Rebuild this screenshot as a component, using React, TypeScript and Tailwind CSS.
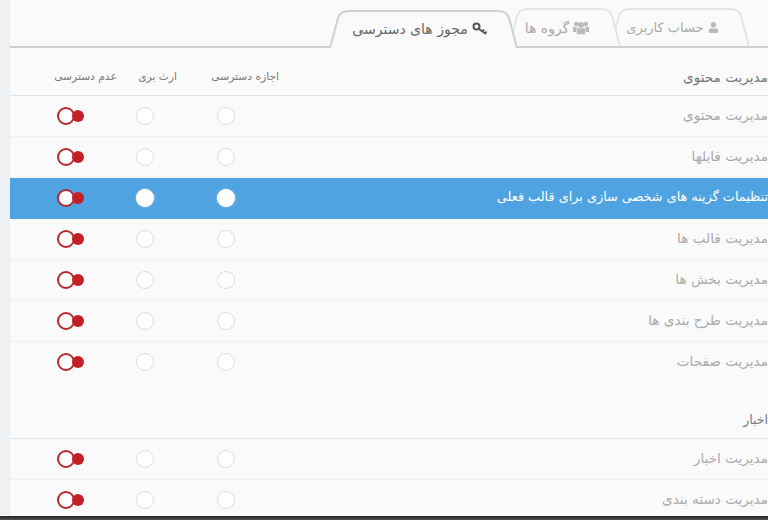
import type { ReactNode } from "react";
import { FaUser } from "react-icons/fa";

const KeyIcon = () => (
  <svg width="15" height="15" viewBox="0 0 15 15" fill="none" stroke="#555" strokeWidth="2">
    <circle cx="4.5" cy="4.5" r="3" />
    <path d="M7 7 L14 12 M10.5 9.5 L12 7.5 M13 11.5 L14.5 9.5" />
  </svg>
);

const UsersIcon = () => (
  <svg width="16" height="14" viewBox="0 0 16 14" fill="#bbb">
    <circle cx="3.2" cy="3" r="2.3" />
    <circle cx="12.8" cy="3" r="2.3" />
    <circle cx="8" cy="4" r="3" />
    <path d="M0 6 H4 V11 H0 Z M12 6 H16 V11 H12 Z" />
    <path d="M3.5 7 H12.5 V13.5 H3.5 Z" stroke="#fafafa" strokeWidth="0.6" />
  </svg>
);

const Tab = ({ width, active, className, children }: { width: number; active?: boolean; className: string; children: ReactNode }) => (
  <div className={`relative h-[38px] shrink-0 ${className}`} style={{ width }}>
    <svg className="absolute inset-0 h-full w-full" viewBox={`0 0 ${width} 38`} fill="none">
      <path
        d={`M1 38 L9 8 Q11 1 20 1 H${width - 20} Q${width - 11} 1 ${width - 9} 8 L${width - 1} 38`}
        fill="#fafafa"
        stroke={active ? "#cfcfcf" : "#e4e4e4"}
        strokeWidth="2"
      />
    </svg>
    <div className={`relative flex h-full items-center justify-center gap-1 pt-[1px] ${active ? "pr-[8px] text-[#666]" : "pr-[15px] text-[#aaa]"}`}>
      {children}
    </div>
  </div>
);

const Row = ({ label, selected, last }: { label: string; selected?: boolean; last?: boolean }) => (
  <div className={`flex h-[41px] items-center border-b pl-[47px] ${selected ? "border-transparent bg-[#4ea3e0]" : last ? "border-transparent" : "border-[#f0f0f0]"}`}>
    <div className="relative h-[18px] w-[18px] shrink-0 rounded-full border-[2px] border-[#b52a2e] bg-white">
      <span className="absolute left-[13px] top-[1px] h-3 w-3 rounded-full bg-[#c22026]" />
    </div>
    <span className={`ml-[61px] h-[18px] w-[18px] shrink-0 rounded-full bg-white ${selected ? "shadow-[0_0_2px_#e5e5e5]" : "border border-[#ddd]"}`} />
    <span className={`ml-[63px] h-[18px] w-[18px] shrink-0 rounded-full bg-white ${selected ? "shadow-[0_0_2px_#e5e5e5]" : "border border-[#ddd]"}`} />
    <div dir="rtl" className={`-mt-[2px] flex-1 ${selected ? "text-[12.8px] text-white" : "text-[13.6px] text-[#aaa]"}`}>
      {label}
    </div>
  </div>
);

export default function App() {
  return (
    <div className="flex h-[520px] w-[768px] flex-col overflow-hidden bg-[#fafafa] font-['DejaVu_Sans',sans-serif]">
      <div className="flex min-h-0 flex-1">
        <div className="w-[10px] shrink-0 bg-[#eef1f3]" />
        <div className="min-w-0 flex-1">
          <div className="flex h-[48px] items-end justify-end border-b-2 border-[#cfcfcf] pr-[18px]">
            <Tab width={189} active className="z-20 -mb-[2px]">
              <span dir="rtl" className="text-[14px]">مجوز های دسترسی</span>
              <KeyIcon />
            </Tab>
            <Tab width={113} className="z-10 -ml-[10px]">
              <span dir="rtl" className="pt-[2px] text-[14px]">گروه ها</span>
              <UsersIcon />
            </Tab>
            <Tab width={140} className="-ml-[11px]">
              <span dir="rtl" className="pt-[1px] text-[13px]">حساب کاربری</span>
              <FaUser className="text-[11px] text-[#bbb]" />
            </Tab>
          </div>

          <div className="mt-[12px] flex h-[36px] items-center border-b border-[#dfe3e6] pl-[44px] text-[10.7px] text-[#777]">
            <span dir="rtl" className="w-[63px] shrink-0 whitespace-nowrap text-center">عدم دسترسی</span>
            <span dir="rtl" className="ml-[24px] w-[36px] shrink-0 whitespace-nowrap text-center">ارث بری</span>
            <span dir="rtl" className="ml-[36px] w-[66px] shrink-0 whitespace-nowrap text-center">اجازه دسترسی</span>
            <div dir="rtl" className="flex-1 text-[13.6px] text-[#777]">مدیریت محتوی</div>
          </div>
          <Row label="مدیریت محتوی" />
          <Row label="مدیریت فایلها" />
          <Row label="تنظیمات گزینه های شخصی سازی برای قالب فعلی" selected />
          <Row label="مدیریت قالب ها" />
          <Row label="مدیریت بخش ها" />
          <Row label="مدیریت طرح بندی ها" />
          <Row label="مدیریت صفحات" last />

          <div dir="rtl" className="mt-[20px] flex h-[36px] items-center border-b border-[#dfe3e6] text-[12.5px] text-[#777]">
            اخبار
          </div>
          <Row label="مدیریت اخبار" />
          <Row label="مدیریت دسته بندی" />
        </div>
      </div>
      <div className="h-[5px] shrink-0 border-t border-white bg-gradient-to-b from-[#222] to-[#555]" />
    </div>
  );
}
